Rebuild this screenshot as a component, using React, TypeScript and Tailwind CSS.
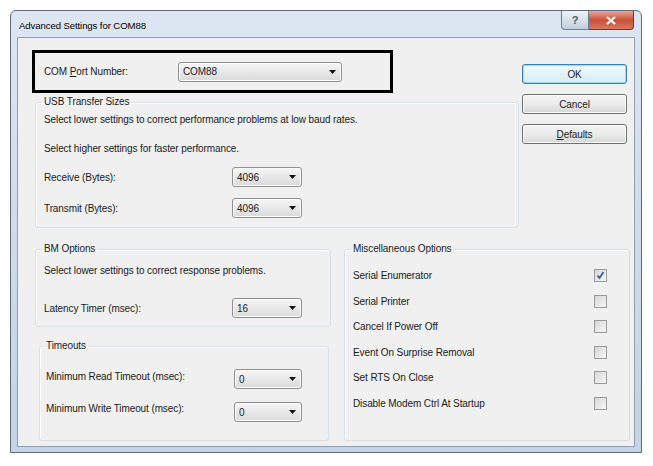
import React from "react";

const Arrow = () => (
  <svg width="7" height="4" viewBox="0 0 7 4">
    <path d="M0 0h7L3.5 4z" fill="#111" />
  </svg>
);

function Combo({ value, w }: { value: string; w: string }) {
  return (
    <div
      className={`${w} h-[20px] flex items-center justify-between pl-[4px] pr-[5px] border border-[#8e8f8f] rounded-[3px] bg-linear-to-b from-[#f6f6f6] to-[#dadada] shadow-[inset_0_0_0_1px_#fbfbfb]`}
    >
      <span>{value}</span>
      <Arrow />
    </div>
  );
}

function Group({ title, className, children }: { title: string; className: string; children: React.ReactNode }) {
  return (
    <fieldset className={`border border-[#d5dfe5] rounded-[3px] shadow-[inset_1px_1px_0_#fff] ${className}`}>
      <legend className="leading-[12px] px-[2px] -ml-[2px]">{title}</legend>
      {children}
    </fieldset>
  );
}

function Btn({ children, primary }: { children: React.ReactNode; primary?: boolean }) {
  return (
    <button
      className={
        primary
          ? "h-[20px] w-[105px] rounded-[3px] border border-[#3c7fb1] bg-linear-to-b from-[#f2fafe] to-[#d4ecf8] shadow-[inset_0_0_0_1px_#9bd6f2]"
          : "h-[20px] w-[105px] rounded-[3px] border border-[#707070] bg-linear-to-b from-[#f4f4f4] via-[#ebebeb] to-[#d6d6d6] shadow-[inset_0_0_0_1px_#fcfcfc]"
      }
    >
      {children}
    </button>
  );
}

function Check({ on }: { on?: boolean }) {
  return (
    <div className="w-[13px] h-[13px] border border-[#9a9a9a] bg-linear-to-br from-[#d8d8d8] to-[#f6f6f6] flex items-center justify-center">
      {on && (
        <svg width="9" height="9" viewBox="0 0 9 9">
          <path d="M1.5 4.5l2 2.5 4-6" stroke="#3d5a99" strokeWidth="1.8" fill="none" />
        </svg>
      )}
    </div>
  );
}

const misc: [string, boolean][] = [
  ["Serial Enumerator", true],
  ["Serial Printer", false],
  ["Cancel If Power Off", false],
  ["Event On Surprise Removal", false],
  ["Set RTS On Close", false],
  ["Disable Modem Ctrl At Startup", false],
];

export default function App() {
  return (
    <div className="w-[653px] h-[466px] bg-white pt-[10px] pl-[10px] text-[10px] tracking-[-0.1px] text-[#1a1a1a] font-['Liberation_Sans',Arial,sans-serif]">
      <div className="w-[632px] border border-[#5d6b7b] rounded-t-[6px] bg-linear-to-b from-[#dde7f3] via-[#cddbea] to-[#c4d4e6]">
        {/* title bar */}
        <div className="h-[26px] flex justify-between pl-[8px] pr-[7px]">
          <div className="pt-[8px] text-black text-[9.6px]">Advanced Settings for COM88</div>
          <div className="flex h-[19px]">
            <div className="w-[28px] border border-[#6f7f90] border-t-0 rounded-bl-[4px] bg-linear-to-b from-[#eef3f8] to-[#c2cedc] flex items-center justify-center text-[11px] font-bold text-[#4d5c6e]">
              ?
            </div>
            <div className="w-[45px] border border-[#6b3a34] border-t-0 border-l-0 rounded-br-[4px] bg-linear-to-b from-[#e9a797] via-[#c9503a] to-[#d87662] flex items-center justify-center">
              <svg width="10" height="9" viewBox="0 0 10 9">
                <path d="M1 1l8 7M9 1L1 8" stroke="#fff" strokeWidth="2.2" />
              </svg>
            </div>
          </div>
        </div>

        {/* client area */}
        <div className="mx-[6px] mb-[5px] h-[410px] border border-[#8fa0b5] bg-[#f0f0f0]">
          <div className="flex pt-[12px]">
            <div className="w-[501px]">
              <div className="ml-[14px] w-[361px] h-[43px] border-[3px] border-black flex items-center pl-[9px]">
                <span className="w-[134px]">
                  COM <span className="underline">P</span>ort Number:
                </span>
                <Combo value="COM88" w="w-[164px]" />
              </div>
              <Group title="USB Transfer Sizes" className="ml-[17px] mt-[3px] w-[484px] pl-[8px] pb-[9px]">
                <div className="mt-[5px] leading-[14px]">
                  Select lower settings to correct performance problems at low baud rates.
                </div>
                <div className="mt-[15px] leading-[14px]">Select higher settings for faster performance.</div>
                <div className="mt-[11px] flex items-center">
                  <span className="w-[188px]">Receive (Bytes):</span>
                  <Combo value="4096" w="w-[70px]" />
                </div>
                <div className="mt-[11px] flex items-center">
                  <span className="w-[188px]">Transmit (Bytes):</span>
                  <Combo value="4096" w="w-[70px]" />
                </div>
              </Group>
            </div>
            <div className="ml-[3px] pt-[14px] flex flex-col gap-[10px]">
              <Btn primary>OK</Btn>
              <Btn>Cancel</Btn>
              <Btn>
                <span className="underline">D</span>efaults
              </Btn>
            </div>
          </div>

          <div className="flex mt-[15px]">
            <div className="ml-[17px] w-[296px]">
              <Group title="BM Options" className="w-[296px] pl-[8px] pb-[8px]">
                <div className="mt-[9px] leading-[14px]">Select lower settings to correct response problems.</div>
                <div className="mt-[20px] flex items-center">
                  <span className="w-[188px]">Latency Timer (msec):</span>
                  <Combo value="16" w="w-[70px]" />
                </div>
              </Group>
              <Group title="Timeouts" className="ml-[4px] mt-[13px] w-[290px] pl-[6px] pb-[17px]">
                <div className="mt-[17px] flex items-center">
                  <span className="w-[188px] mb-[5px]">Minimum Read Timeout (msec):</span>
                  <Combo value="0" w="w-[68px]" />
                </div>
                <div className="mt-[12px] flex items-center">
                  <span className="w-[188px] mb-[7px]">Minimum Write Timeout (msec):</span>
                  <Combo value="0" w="w-[68px]" />
                </div>
              </Group>
            </div>
            <Group title="Miscellaneous Options" className="ml-[13px] w-[286px] pl-[8px] pr-[22px]">
              <div className="mt-[8px]">
                {misc.map(([label, on]) => (
                  <div key={label} className="h-[25.5px] flex items-center justify-between">
                    <span>{label}</span>
                    <Check on={on} />
                  </div>
                ))}
              </div>
            </Group>
          </div>
        </div>
      </div>
    </div>
  );
}
